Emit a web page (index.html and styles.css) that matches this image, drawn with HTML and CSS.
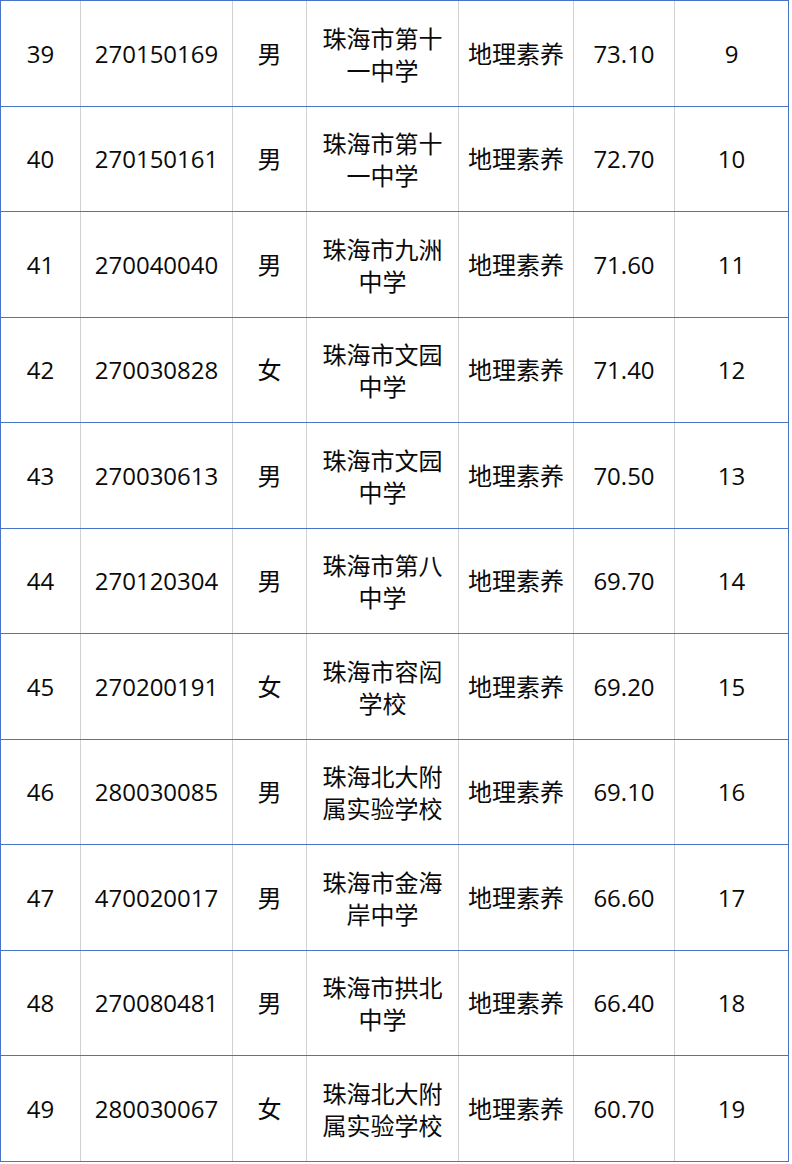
FILE: index.html
```html
<!DOCTYPE html>
<html lang="zh">
<head>
<meta charset="utf-8">
<title>地理素养成绩</title>
<link rel="stylesheet" href="styles.css">
</head>
<body>
<div class="table">
  <div class="row"><div class="cell">39</div><div class="cell">270150169</div><div class="cell">男</div><div class="cell school">珠海市第十一中学</div><div class="cell">地理素养</div><div class="cell">73.10</div><div class="cell">9</div></div>
  <div class="row"><div class="cell">40</div><div class="cell">270150161</div><div class="cell">男</div><div class="cell school">珠海市第十一中学</div><div class="cell">地理素养</div><div class="cell">72.70</div><div class="cell">10</div></div>
  <div class="row"><div class="cell">41</div><div class="cell">270040040</div><div class="cell">男</div><div class="cell school">珠海市九洲中学</div><div class="cell">地理素养</div><div class="cell">71.60</div><div class="cell">11</div></div>
  <div class="row"><div class="cell">42</div><div class="cell">270030828</div><div class="cell">女</div><div class="cell school">珠海市文园中学</div><div class="cell">地理素养</div><div class="cell">71.40</div><div class="cell">12</div></div>
  <div class="row"><div class="cell">43</div><div class="cell">270030613</div><div class="cell">男</div><div class="cell school">珠海市文园中学</div><div class="cell">地理素养</div><div class="cell">70.50</div><div class="cell">13</div></div>
  <div class="row"><div class="cell">44</div><div class="cell">270120304</div><div class="cell">男</div><div class="cell school">珠海市第八中学</div><div class="cell">地理素养</div><div class="cell">69.70</div><div class="cell">14</div></div>
  <div class="row"><div class="cell">45</div><div class="cell">270200191</div><div class="cell">女</div><div class="cell school">珠海市容闳学校</div><div class="cell">地理素养</div><div class="cell">69.20</div><div class="cell">15</div></div>
  <div class="row"><div class="cell">46</div><div class="cell">280030085</div><div class="cell">男</div><div class="cell school">珠海北大附属实验学校</div><div class="cell">地理素养</div><div class="cell">69.10</div><div class="cell">16</div></div>
  <div class="row"><div class="cell">47</div><div class="cell">470020017</div><div class="cell">男</div><div class="cell school">珠海市金海岸中学</div><div class="cell">地理素养</div><div class="cell">66.60</div><div class="cell">17</div></div>
  <div class="row"><div class="cell">48</div><div class="cell">270080481</div><div class="cell">男</div><div class="cell school">珠海市拱北中学</div><div class="cell">地理素养</div><div class="cell">66.40</div><div class="cell">18</div></div>
  <div class="row"><div class="cell">49</div><div class="cell">280030067</div><div class="cell">女</div><div class="cell school">珠海北大附属实验学校</div><div class="cell">地理素养</div><div class="cell">60.70</div><div class="cell">19</div></div>
</div>
</body>
</html>
```
FILE: styles.css
```css
html, body {
  margin: 0;
  padding: 0;
  background: #ffffff;
}
body {
  font-family: "Open Sans", "Noto Sans CJK SC", sans-serif;
  font-size: 24px;
  color: #0a0a0a;
}
.table {
  width: 789px;
  border-top: 1px solid #4774c6;
}
.row {
  display: grid;
  grid-template-columns: 80px 152px 74px 152px 115px 101px 113px;
  height: 106px;
  box-sizing: border-box;
  border-left: 1px solid #4774c6;
  border-right: 1px solid #4774c6;
  border-bottom: 1px solid #4774c6;
}
.row:nth-child(even) {
  height: 105px;
}
.cell {
  display: flex;
  align-items: center;
  justify-content: center;
  text-align: center;
  border-right: 1px solid #d0d0d0;
  line-height: 32px;
  padding: 0 8px;
  overflow: hidden;
}
.cell:last-child {
  border-right: none;
}
.school {
  font-family: "Noto Sans CJK SC", sans-serif;
  padding: 0 10px;
}
```
